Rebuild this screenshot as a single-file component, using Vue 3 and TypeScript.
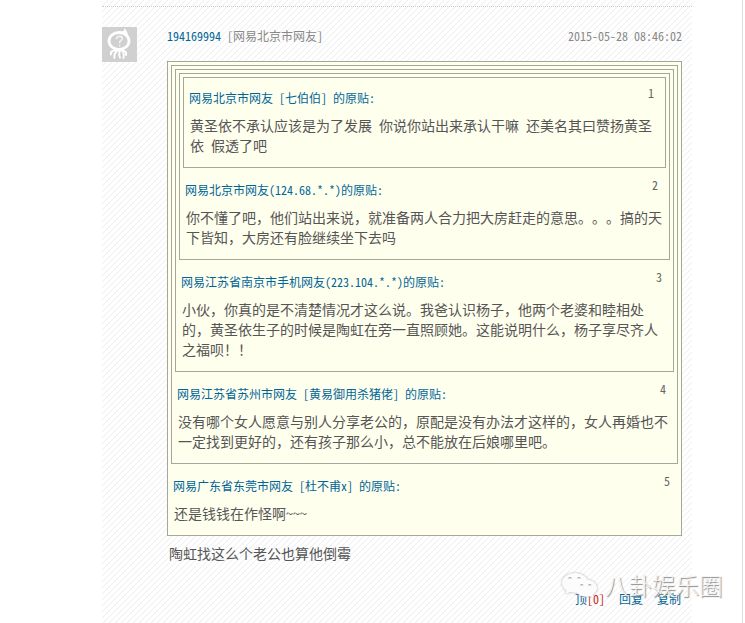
<template>
	<div class="page">
		<div class="column">
			<article class="post">
				<svg class="avatar" viewBox="0 0 35 35" fill="none" stroke="#fff" stroke-linecap="round">
					<ellipse cx="17" cy="14" rx="10" ry="8.5" stroke-width="2.8" />
					<path d="M18 5.500c3 .3 4.500-.5 5-2 1 1.500 2.200 3 1.500 5" stroke-width="2.200" />
					<path d="M14.500 11.700q.5-2.500 3.200-2.500 2.600.1 2.600 2.300c0 2-2.700 1.900-2.700 4.200M17.600 18.300v.4" stroke="#f4f4f4" stroke-width="1.500" />
					<path d="M8.800 27.500q-.3-3.500 3.700-4M14 25q-2.500 3-1.500 6M17.500 24.500q-.8 3.500.5 6M21 24.500q1.500 3 .5 6.500M21.500 23.500q3.500 1.500 2.500 4.500M12.500 23.500h9" stroke-width="1.900" />
				</svg>
				<div class="main">
					<header class="meta">
						<span><a class="user"><RunText text="194169994" /></a><RunText text=" [网易北京市网友]" /></span>
						<time><RunText text="2015-05-28 08:46:02" /></time>
					</header>
					<QuoteFloor :level="quotes.length" />
					<p class="body"><RunText text="陶虹找这么个老公也算他倒霉" /></p>
					<footer class="actions">
						<a>顶<em><RunText text="[0]" /></em></a>
						<a>回复</a>
						<a>复制</a>
					</footer>
				</div>
			</article>
		</div>
		<div class="edge"></div>
		<div class="watermark">
			<svg viewBox="0 0 38 28">
				<path d="M14 1C6.500 1 1 5.500 1 11c0 3.200 1.800 5.800 4.500 7.600L4 22l5-2c1.600.5 3.200.8 5 .8 7.400 0 13-4.200 13-9.800S21.400 1 14 1z" />
				<path d="M25 7.500c-6 0-11 3.800-11 8.600s5 8.600 11 8.600c1.400 0 2.700-.2 4-.6l3.500 1.800-.8-3.200c2.600-1.600 4.300-3.900 4.300-6.600 0-4.800-5-8.600-11-8.600z" />
				<path class="eyes" d="M7.500 6.500q1.500-2 3 0M16.500 6.500q1.500-2 3 0M19.500 13.500q1.300-2 2.600 0M27.500 13.500q1.300-2 2.600 0" />
			</svg>
			<span>八卦娱乐圈</span>
		</div>
	</div>
</template>

<script setup lang="ts">
import { h, type FunctionalComponent, type VNode } from 'vue'

interface Quote {
	author: string
	lines: string[]
}

const quotes: Quote[] = [
	{
		author: '网易北京市网友 [七伯伯] 的原贴:',
		lines: ['黄圣依不承认应该是为了发展 你说你站出来承认干嘛 还美名其曰赞扬黄圣', '依 假透了吧'],
	},
	{
		author: '网易北京市网友(124.68.*.*)的原贴:',
		lines: ['你不懂了吧，他们站出来说，就准备两人合力把大房赶走的意思。。。搞的天', '下皆知，大房还有脸继续坐下去吗'],
	},
	{
		author: '网易江苏省南京市手机网友(223.104.*.*)的原贴:',
		lines: ['小伙，你真的是不清楚情况才这么说。我爸认识杨子，他两个老婆和睦相处', '的，黄圣依生子的时候是陶虹在旁一直照顾她。这能说明什么，杨子享尽齐人', '之福呗！！'],
	},
	{
		author: '网易江苏省苏州市网友 [黄易御用杀猪佬] 的原贴:',
		lines: ['没有哪个女人愿意与别人分享老公的，原配是没有办法才这样的，女人再婚也不', '一定找到更好的，还有孩子那么小，总不能放在后娘哪里吧。'],
	},
	{
		author: '网易广东省东莞市网友 [杜不甫x] 的原贴:',
		lines: ['还是钱钱在作怪啊~~~'],
	},
]

// Latin runs are set at exactly half the width of a Chinese character
const RunText: FunctionalComponent<{ text: string }> = (props) =>
	props.text
		.split(/([\x20-\x7e]+)/)
		.filter(Boolean)
		.map((part) => h('span', { class: /^[\x20-\x7e]/.test(part) ? 'half' : 'full' }, part))
RunText.props = ['text']

// Each floor wraps the earlier ones
const QuoteFloor: FunctionalComponent<{ level: number }> = (props): VNode => {
	const quote = quotes[props.level - 1]
	return h('div', { class: 'floor' }, [
		props.level > 1 ? h(QuoteFloor, { level: props.level - 1 }) : null,
		h('div', { class: 'quote' }, [
			h('div', { class: 'quote-head' }, [
				h('span', { class: 'author' }, h(RunText, { text: quote.author })),
				h('span', { class: 'number' }, h(RunText, { text: String(props.level) })),
			]),
			...quote.lines.map((line) => h('div', { class: 'line' }, h(RunText, { text: line }))),
		]),
	])
}
QuoteFloor.props = ['level']
</script>

<style>
body {
	background: #fff;
	overflow: hidden;
}

.half {
	font-feature-settings: 'hwid';
}

.floor {
	border: 1px solid #a5a79f;
	padding: 3px;
	background: #ffffee;
}

.floor .floor + .quote {
	padding-top: 12px;
}

.floor:not(:has(.floor)) {
	padding-top: 0;
}

.quote {
	padding: 10px 2px 9px;
}

.quote-head {
	display: flex;
	justify-content: space-between;
	height: 20px;
	margin-bottom: 7px;
	line-height: 20px;
	font-size: 12px;
}

.author {
	color: #006699;
}

.number {
	margin: -5px 6px 0 0;
	color: #666;
}

.line {
	height: 20px;
	padding-left: 1px;
	line-height: 20px;
	font-size: 14px;
}
</style>

<style scoped>
.page {
	position: relative;
	display: flex;
	width: 745px;
	height: 623px;
	overflow: hidden;
	font-family: 'Noto Sans CJK SC', sans-serif;
	font-size: 12px;
	color: #555;
	white-space: pre;
	text-spacing-trim: space-all;
}

.column {
	width: 590px;
	margin-left: 102px;
	padding-top: 6px;
	background: linear-gradient(135deg, #fff 41%, #efefef 47%, #efefef 53%, #fff 59%) 0 0 / 6px 6px;
}

.post {
	display: flex;
	gap: 30px;
	padding-top: 20px;
	border-top: 1px dotted #ccc;
}

.avatar {
	width: 35px;
	height: 35px;
	background: #d0d0d0;
}

.main {
	width: 515px;
}

.meta {
	display: flex;
	justify-content: space-between;
	height: 35px;
	margin-top: -1px;
	line-height: 20px;
	color: #888;
}

.user {
	color: #006699;
}

.body {
	margin: 7px 0 0 2px;
	font-size: 14px;
	line-height: 20px;
}

.actions {
	display: flex;
	justify-content: flex-end;
	gap: 14px;
	margin: 26px 1px 0 0;
	line-height: 20px;
	color: #006699;
}

.actions em {
	font-style: normal;
	color: #cc1b1b;
}

.edge {
	width: 1px;
	margin-left: 50px;
	background: #ddd;
}

.watermark {
	position: absolute;
	left: 561px;
	top: 572px;
	display: flex;
	align-items: flex-start;
	gap: 6px;
	font-size: 23.500px;
	font-weight: 300;
	line-height: 26px;
	color: #f4f4f4;
	text-shadow: 1px 1px 1px #888;
}

.watermark svg {
	width: 38px;
	height: 28px;
	fill: #fcfcfc;
	filter: drop-shadow(0 0 1px #aaa);
}

.watermark .eyes {
	fill: none;
	stroke: #aaa;
	stroke-width: 1.200;
}
</style>
